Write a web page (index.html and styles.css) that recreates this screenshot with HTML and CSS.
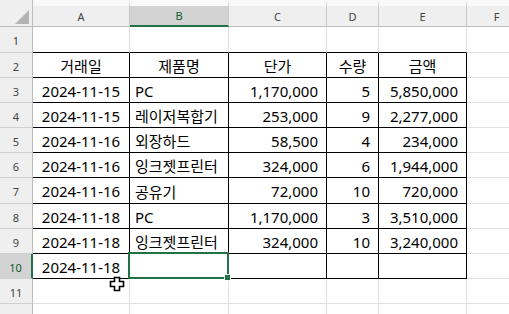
FILE: index.html
```html
<!DOCTYPE html>
<html lang="ko">
<head>
<meta charset="utf-8">
<link rel="stylesheet" href="styles.css">
</head>
<body>
<div class="sheet">
  <div class="corner"><span class="tri"></span></div>
  <div class="ch">A</div>
  <div class="ch sel">B</div>
  <div class="ch">C</div>
  <div class="ch">D</div>
  <div class="ch">E</div>
  <div class="ch">F</div>

  <div class="rh">1</div>
  <div class="c tb"></div><div class="c tb"></div><div class="c tb"></div><div class="c tb"></div><div class="c tb"></div><div class="c"></div>

  <div class="rh">2</div>
  <div class="c t ctr">거래일</div><div class="c t ctr">제품명</div><div class="c t ctr">단가</div><div class="c t ctr">수량</div><div class="c t ctr">금액</div><div class="c"></div>

  <div class="rh">3</div>
  <div class="c t ctr">2024-11-15</div><div class="c t lft">PC</div><div class="c t num">1,170,000</div><div class="c t num">5</div><div class="c t num">5,850,000</div><div class="c"></div>

  <div class="rh">4</div>
  <div class="c t ctr">2024-11-15</div><div class="c t lft">레이저복합기</div><div class="c t num">253,000</div><div class="c t num">9</div><div class="c t num">2,277,000</div><div class="c"></div>

  <div class="rh">5</div>
  <div class="c t ctr">2024-11-16</div><div class="c t lft">외장하드</div><div class="c t num">58,500</div><div class="c t num">4</div><div class="c t num">234,000</div><div class="c"></div>

  <div class="rh">6</div>
  <div class="c t ctr">2024-11-16</div><div class="c t lft">잉크젯프린터</div><div class="c t num">324,000</div><div class="c t num">6</div><div class="c t num">1,944,000</div><div class="c"></div>

  <div class="rh">7</div>
  <div class="c t ctr">2024-11-16</div><div class="c t lft">공유기</div><div class="c t num">72,000</div><div class="c t num">10</div><div class="c t num">720,000</div><div class="c"></div>

  <div class="rh">8</div>
  <div class="c t ctr">2024-11-18</div><div class="c t lft">PC</div><div class="c t num">1,170,000</div><div class="c t num">3</div><div class="c t num">3,510,000</div><div class="c"></div>

  <div class="rh">9</div>
  <div class="c t ctr">2024-11-18</div><div class="c t lft">잉크젯프린터</div><div class="c t num">324,000</div><div class="c t num">10</div><div class="c t num">3,240,000</div><div class="c"></div>

  <div class="rh sel">10</div>
  <div class="c t ctr">2024-11-18</div><div class="c t lft active"><span class="selbox"></span><span class="handle"></span></div><div class="c t num"></div><div class="c t num"></div><div class="c t num"></div><div class="c"></div>

  <div class="rh">11</div>
  <div class="c"></div><div class="c"></div><div class="c"></div><div class="c"></div><div class="c"></div><div class="c"></div>

  <div class="rh">12</div>
  <div class="c"></div><div class="c"></div><div class="c"></div><div class="c"></div><div class="c"></div><div class="c"></div>
</div>
<svg class="cursor" width="17" height="17" viewBox="0 0 17 17">
  <polygon points="5.5,1.5 10.5,1.5 10.5,5.5 14.5,5.5 14.5,10.5 10.5,10.5 10.5,14.5 5.5,14.5 5.5,10.5 1.5,10.5 1.5,5.5 5.5,5.5" fill="#fff" stroke="#000" stroke-width="1.6" stroke-linejoin="miter"/>
</svg>
</body>
</html>
```
FILE: styles.css
```css
html, body {
  margin: 0;
  padding: 0;
  background: #fff;
  overflow: hidden;
}
.sheet {
  position: relative;
  display: grid;
  grid-template-columns: 33px 97px 99px 98px 52px 88px 60px;
  grid-template-rows: 27px 26px 25px 25px 25px 25px 25px 26px 25px 25px 25px 25px 25px;
  width: 509px;
  height: 314px;
  overflow: hidden;
  font-family: "Noto Sans", "Noto Sans CJK KR", sans-serif;
}
.corner {
  background: #efefef;
  border-right: 1px solid #bdbdbd;
  border-bottom: 1px solid #bdbdbd;
  box-sizing: border-box;
  position: relative;
}
.tri {
  position: absolute;
  left: 15px;
  top: 10px;
  width: 0;
  height: 0;
  border-left: 14px solid transparent;
  border-bottom: 14px solid #b4b4b4;
}
.ch {
  background: #efefef;
  border-top: 6px solid #f9f9f9;
  border-right: 1px solid #c8c8c8;
  border-bottom: 1px solid #bdbdbd;
  box-sizing: border-box;
  display: flex;
  align-items: center;
  justify-content: center;
  font-size: 11px;
  color: #444;
  font-family: "Noto Sans", "Segoe UI", sans-serif;
}
.ch.sel {
  background: #d3d3d3;
  color: #0e5c30;
  border-bottom: 2px solid #217346;
}
.rh {
  background: #efefef;
  border-right: 1px solid #bdbdbd;
  border-bottom: 1px solid #d0d0d0;
  box-sizing: border-box;
  display: flex;
  align-items: center;
  justify-content: center;
  font-size: 11px;
  color: #444;
  padding-top: 2px;
}
.rh.sel {
  background: #d3d3d3;
  color: #0e5c30;
  border-right: 2px solid #217346;
}
.c {
  border-right: 1px solid #e1e1e1;
  border-bottom: 1px solid #e1e1e1;
  box-sizing: border-box;
  display: flex;
  align-items: center;
  font-size: 15px;
  color: #000;
  white-space: nowrap;
  padding-top: 1px;
}
.c.tb {
  border-bottom-color: #000;
}
.c.t {
  border-right-color: #000;
  border-bottom-color: #000;
}
.ctr {
  justify-content: center;
}
.lft {
  justify-content: flex-start;
  padding-left: 5px;
}
.num {
  justify-content: flex-end;
  padding-right: 8px;
}
.active {
  position: relative;
}
.selbox {
  position: absolute;
  left: -2px;
  top: -2px;
  right: -1px;
  bottom: -1px;
  border: 2px solid #217346;
}
.handle {
  position: absolute;
  right: -3px;
  bottom: -3px;
  width: 5px;
  height: 5px;
  background: #217346;
  border: 1px solid #fff;
}
.cursor {
  position: absolute;
  left: 109px;
  top: 276px;
}
```
